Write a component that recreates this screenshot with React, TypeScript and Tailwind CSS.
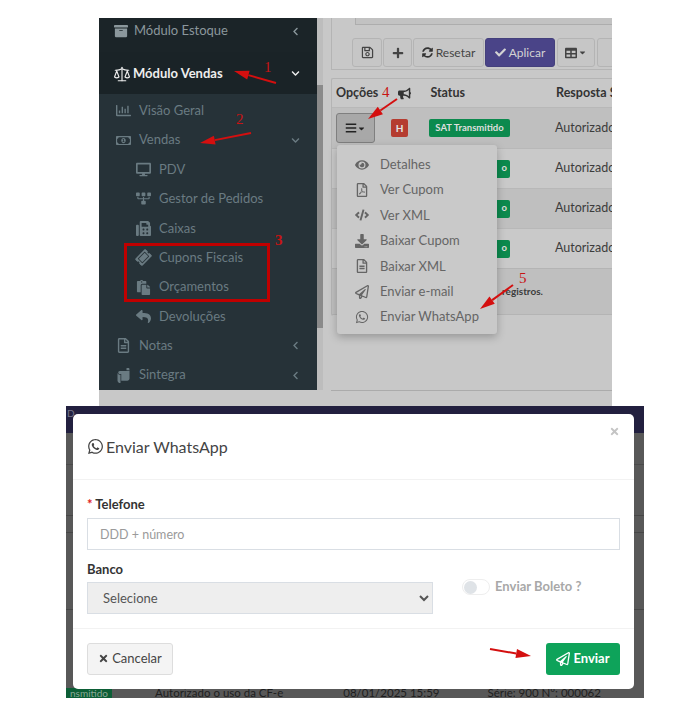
import type { ReactNode } from "react";
import { Scale } from "lucide-react";
import {
  FaArchive,
  FaBars,
  FaBullhorn,
  FaCaretDown,
  FaCheck,
  FaChevronDown,
  FaChevronLeft,
  FaCode,
  FaDesktop,
  FaDownload,
  FaEye,
  FaFax,
  FaPaste,
  FaPlus,
  FaRegChartBar,
  FaRegFileAlt,
  FaRegFilePdf,
  FaRegMoneyBillAlt,
  FaRegPaperPlane,
  FaRegSave,
  FaReply,
  FaScroll,
  FaSitemap,
  FaSyncAlt,
  FaTable,
  FaTicketAlt,
  FaTimes,
  FaWhatsapp,
} from "react-icons/fa";

const subMenu = [
  { icon: <FaDesktop />, label: "PDV" },
  { icon: <FaSitemap className="rotate-180" />, label: "Gestor de Pedidos" },
  { icon: <FaFax />, label: "Caixas" },
  { icon: <FaTicketAlt className="-rotate-45" />, label: "Cupons Fiscais" },
  { icon: <FaPaste />, label: "Orçamentos" },
  { icon: <FaReply />, label: "Devoluções" },
];

const dropdownItems = [
  { icon: <FaEye />, label: "Detalhes" },
  { icon: <FaRegFilePdf />, label: "Ver Cupom" },
  { icon: <FaCode />, label: "Ver XML" },
  { icon: <FaDownload />, label: "Baixar Cupom" },
  { icon: <FaRegFileAlt />, label: "Baixar XML" },
  { icon: <FaRegPaperPlane />, label: "Enviar e-mail" },
  { icon: <FaWhatsapp />, label: "Enviar WhatsApp" },
];

function SideRow({ icon, label, chevron }: { icon: ReactNode; label: string; chevron?: ReactNode }) {
  return (
    <div className="flex h-[29.4px] items-center pl-[17px] pr-[17px] text-[13px] text-[#6a7b82]">
      <span className="flex w-[23px] text-[15px]">{icon}</span>
      <span className="flex-1">{label}</span>
      <span className="text-[9px]">{chevron}</span>
    </div>
  );
}

function ToolButton({ children, className }: { children: ReactNode; className: string }) {
  return (
    <div className={`flex h-[29px] shrink-0 items-center justify-center gap-[3px] rounded-[3px] border border-[#b4b4b4] bg-[#c6c6c6] text-[12px] text-[#444] ${className}`}>
      {children}
    </div>
  );
}

function TableRow({ className, first }: { className: string; first?: boolean }) {
  return (
    <div className={`flex items-center border-t border-[#b8b8b8] text-[12.5px] text-[#3c3c3c] ${className}`}>
      {first && (
        <div className="ml-[4px] flex h-[30px] w-[39px] shrink-0 items-center justify-center rounded-[3px] border border-[#7f7f7f] bg-[#a8a8a8] text-[#222]">
          <FaBars className="text-[12px]" />
          <FaCaretDown className="text-[9px]" />
        </div>
      )}
      {first && (
        <div className="ml-[16px] flex h-[18px] w-[17px] shrink-0 items-center justify-center rounded-[2px] bg-[#b53c30] text-[10px] font-bold text-[#e4e4e4]">H</div>
      )}
      {first ? (
        <div className="ml-[21px] flex h-[18px] w-[81px] shrink-0 items-center justify-center whitespace-nowrap rounded-[2px] bg-[#0c8a4e] text-[9.5px] font-bold text-[#dfdfdf]">SAT Transmitido</div>
      ) : (
        <div className="ml-[97px] flex h-[18px] w-[81px] shrink-0 items-center justify-end rounded-[2px] bg-[#0c8a4e] pr-[3px] text-[9.5px] font-bold text-[#dfdfdf]">o</div>
      )}
      <span className="ml-[45px] shrink-0 whitespace-nowrap">Autorizado o uso da CF-e</span>
    </div>
  );
}

function TopScreen() {
  return (
    <section className="ml-[99px] flex h-[388px] w-[513px] items-start overflow-hidden bg-[#c8c8c8]">
      <aside className="flex h-[372px] w-[218px] shrink-0 flex-col bg-[#263238]">
        <div className="flex h-[34px] shrink-0 bg-[#1b2428] pb-[8px]">
          <div className="flex flex-1 items-center pl-[15px] pr-[17px] text-[13px] text-[#8b979c]">
            <FaArchive className="mr-[6px] text-[14px]" />
            <span className="flex-1">Módulo Estoque</span>
            <FaChevronLeft className="text-[9px]" />
          </div>
        </div>
        <div className="flex h-[42px] shrink-0 items-center bg-[#1a2327] pl-[14px] pr-[17px] pt-[1px] text-[13px] font-bold text-[#eeeeee]">
          <Scale className="mr-[2px] h-[18px] w-[18px]" strokeWidth={1.5} />
          <span className="flex-1">Módulo Vendas</span>
          <FaChevronDown className="text-[9px]" />
        </div>
        <div className="pt-[2px]">
          <SideRow icon={<FaRegChartBar />} label="Visão Geral" />
          <SideRow icon={<FaRegMoneyBillAlt />} label="Vendas" chevron={<FaChevronDown />} />
          {subMenu.map((item) => (
            <div key={item.label} className="flex h-[29.4px] items-center pl-[37px] text-[13px] text-[#6a7b82]">
              <span className="flex w-[23px] text-[15px]">{item.icon}</span>
              <span>{item.label}</span>
            </div>
          ))}
          <SideRow icon={<FaRegFileAlt />} label="Notas" chevron={<FaChevronLeft />} />
          <SideRow icon={<FaScroll className="rotate-90" />} label="Sintegra" chevron={<FaChevronLeft />} />
        </div>
      </aside>

      <div className="flex h-[372px] w-[6px] shrink-0 flex-col bg-[#bdbdbd]">
        <div className="mt-[67px] h-[243px] bg-[#8a8a8a]" />
      </div>

      <main className="relative h-full flex-1 overflow-hidden pl-[8px]">
        <div className="flex h-[52px] flex-col border-b border-l border-[#b4b4b4] pl-[20px]">
          <div className="ml-[3px] h-[7px] border-b border-l border-[#adadad] bg-[#c2c2c2]" />
          <div className="mt-[13px] flex gap-[1px]">
            <ToolButton className="w-[30px] text-[13px]"><FaRegSave /></ToolButton>
            <ToolButton className="w-[29px] text-[12px] text-[#222]"><FaPlus /></ToolButton>
            <ToolButton className="w-[71px]"><FaSyncAlt className="text-[11px] text-[#333]" />Resetar</ToolButton>
            <ToolButton className="w-[70px] !border-[#44407c] !bg-[#4a4488] !text-[#d3d3d3]"><FaCheck className="text-[11px]" />Aplicar</ToolButton>
            <ToolButton className="ml-[1px] w-[38px]"><FaTable className="text-[12px]" /><FaCaretDown className="-ml-[2px] text-[9px]" /></ToolButton>
            <ToolButton className="ml-[1px] w-[30px]"> </ToolButton>
          </div>
        </div>
        <div className="mt-[8px] h-[238px] w-[300px] rounded-[2px] border-l border-t border-[#b4b4b4]">
          <div className="flex h-[28px] items-center whitespace-nowrap pl-[4px] text-[12.5px] font-bold text-[#333]">
            <span>Opções</span>
            <FaBullhorn className="ml-[20px] shrink-0 text-[13px]" />
            <span className="ml-[19px]">Status</span>
            <span className="ml-[91px]">Resposta SEFAZ</span>
          </div>
          <TableRow first className="h-[41px] bg-[#bfbfbf]" />
          <TableRow className="h-[40px] bg-[#c9c9c9]" />
          <TableRow className="h-[40px] bg-[#bfbfbf]" />
          <TableRow className="h-[40px] bg-[#c9c9c9]" />
          <div className="flex h-[47px] items-center border-y border-[#b4b4b4] bg-[#bfbfbf] pl-[170px] text-[10px] font-bold text-[#3c3c3c]">registros.</div>
        </div>
        <div className="mt-[74px] border-t border-[#ababab]" />
        <div className="absolute left-[14px] top-[127px] flex h-[189px] w-[160px] flex-col rounded-[3px] bg-[#c9c9c9] pt-[7px] shadow-[0_3px_8px_rgba(0,0,0,0.25)]">
          {dropdownItems.map((item) => (
            <div key={item.label} className="flex h-[25.4px] shrink-0 items-center pl-[18px] text-[13px] text-[#656565]">
              <span className="flex w-[25px] text-[14px]">{item.icon}</span>
              <span className="whitespace-nowrap">{item.label}</span>
            </div>
          ))}
        </div>
      </main>
    </section>
  );
}

function ModalScreen() {
  return (
    <section className="relative ml-[66px] h-[292px] w-[578px] overflow-hidden bg-[#585858]">
      {/* page behind the backdrop */}
      <div className="absolute inset-x-0 top-0 flex h-[27px] items-start bg-[#22203f] pl-[1px] text-[10px] text-[#77768a]">D</div>
      <div className="absolute inset-x-0 top-[58px] border-t border-[#4a4a4a]" />
      <div className="absolute inset-x-0 top-[109px] border-t border-[#464646]" />
      <div className="absolute inset-x-0 top-[126px] border-t border-[#464646]" />
      <div className="absolute inset-x-0 top-[203px] border-t border-[#464646]" />
      <div className="absolute bottom-0 left-0 right-0 flex h-[10px] items-center overflow-hidden whitespace-nowrap text-[11.5px] text-[#1e1e1e]">
        <span className="h-full w-[46px] shrink-0 bg-[#0c5e36] text-center text-[10px] leading-[10px] text-[#8aa897]">nsmitido</span>
        <span className="ml-[43px] shrink-0">Autorizado o uso da CF-e</span>
        <span className="ml-[60px] shrink-0">08/01/2025 15:59</span>
        <span className="ml-[48px] shrink-0">Série: 900 N°: 000062</span>
      </div>

      <div className="relative mx-[7px] mt-[8px] flex h-[275px] w-[561px] flex-col rounded-[5px] bg-white text-[#333]">
        <header className="relative flex h-[66px] shrink-0 items-center border-b border-[#f2f2f2] pl-[14px] text-[16px] text-[#444]">
          <FaWhatsapp className="mr-[2px] text-[17px]" />
          Enviar WhatsApp
          <FaTimes className="absolute right-[14px] top-[12px] text-[11px] text-[#c4c4c4]" />
        </header>
        <div className="flex-1 px-[14px]">
          <label className="mt-[15px] block h-[23px] text-[13px] font-bold leading-[18px]">
            <span className="text-[#e02020]">* </span>Telefone
          </label>
          <input
            placeholder="DDD + número"
            className="block h-[32px] w-[533px] border border-[#d9dee4] px-[12px] text-[12.5px] placeholder:text-[#9a9a9a]"
          />
          <div className="mt-[11px] flex">
            <div className="w-[346px] shrink-0">
              <label className="block h-[21px] text-[13px] font-bold leading-[16px]">Banco</label>
              <select className="block h-[32px] w-full border border-[#d9dee4] bg-[#eeeeee] px-[11px] text-[13px] text-[#555]">
                <option>Selecione</option>
              </select>
            </div>
            <div className="ml-[29px] mt-[-1px] flex h-[18px] items-center self-center text-[13px] font-bold text-[#a8a8a8]">
              <span className="mr-[5px] flex h-[16px] w-[28px] items-center rounded-full border border-[#eeeeee] pl-[1px]">
                <span className="h-[13px] w-[13px] rounded-full bg-[#dfe3e7]" />
              </span>
              Enviar Boleto ?
            </div>
          </div>
        </div>
        <footer className="flex h-[61px] shrink-0 items-center justify-between border-t border-[#f2f2f2] px-[14px] pb-[1px]">
          <button className="flex h-[32px] w-[86px] items-center justify-center gap-[3px] rounded-[3px] border border-[#dddddd] bg-[#f4f4f4] text-[13px] text-[#444]">
            <FaTimes className="text-[11px]" />
            Cancelar
          </button>
          <button className="flex h-[32px] w-[74px] items-center justify-center gap-[3px] rounded-[3px] bg-[#0ea35a] text-[13px] font-bold text-white">
            <FaRegPaperPlane className="text-[14px]" />
            Enviar
          </button>
        </footer>
      </div>
    </section>
  );
}

function Arrow({ x1, y1, x2, y2 }: { x1: number; y1: number; x2: number; y2: number }) {
  const a = Math.atan2(y2 - y1, x2 - x1);
  const bx = x2 - Math.cos(a) * 15;
  const by = y2 - Math.sin(a) * 15;
  const nx = -Math.sin(a) * 4.5;
  const ny = Math.cos(a) * 4.5;
  return (
    <g fill="#d40f0f" stroke="#d40f0f">
      <line x1={x1} y1={y1} x2={bx} y2={by} strokeWidth="2" />
      <polygon points={`${x2},${y2} ${bx + nx},${by + ny} ${bx - nx},${by - ny}`} strokeWidth="0" />
    </g>
  );
}

const marks = [
  { text: "1", className: "left-[264px] top-[57px]" },
  { text: "2", className: "left-[236px] top-[109px]" },
  { text: "3", className: "left-[275px] top-[230px] font-bold" },
  { text: "4", className: "left-[382px] top-[82px]" },
  { text: "5", className: "left-[519px] top-[268px]" },
];

export default function App() {
  return (
    <div className="relative h-[702px] w-[688px] overflow-hidden bg-white pt-[18px] font-['Lato',sans-serif]">
      <TopScreen />
      <ModalScreen />

      {/* annotations drawn over the screenshots */}
      <svg className="pointer-events-none absolute inset-0" width="688" height="702">
        <Arrow x1={276} y1={83} x2={234} y2={71} />
        <Arrow x1={251} y1={133} x2={200} y2={143} />
        <Arrow x1={397} y1={99} x2={368} y2={119} />
        <Arrow x1={513} y1={285} x2={480} y2={309} />
        <Arrow x1={490} y1={649} x2={531} y2={656} />
      </svg>
      <div className="absolute left-[124px] top-[243px] h-[59px] w-[146px] border-[3px] border-[#c00000]" />
      {marks.map((mark) => (
        <span key={mark.text} className={`absolute font-['Liberation_Serif',serif] text-[15px] leading-[20px] text-[#c81414] ${mark.className}`}>
          {mark.text}
        </span>
      ))}
    </div>
  );
}
